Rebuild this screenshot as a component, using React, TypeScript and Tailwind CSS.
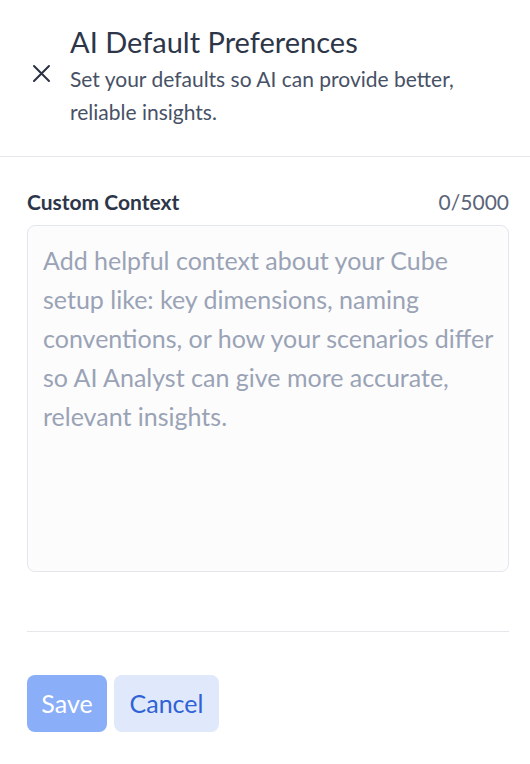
import React from "react";

export default function App() {
  return (
    <div className="w-[530px] h-[764px] bg-white flex flex-col" style={{ fontFamily: "Lato, 'Noto Sans', sans-serif" }}>
      <div className="flex items-start gap-[19px] pl-[32px] pt-[22px] pb-[28px] border-b border-[#e5e7eb]">
        <svg width="19" height="19" viewBox="0 0 19 19" className="shrink-0 mt-[42px]">
          <path d="M2 2L17 17M17 2L2 17" stroke="#2a3142" strokeWidth="2" strokeLinecap="round" />
        </svg>
        <div className="flex flex-col">
          <div className="text-[29px] leading-[40px] text-[#2d3648]">AI Default Preferences</div>
          <div className="text-[21px] leading-[33px] text-[#475166]">
            Set your defaults so AI can provide better,
            <br />
            reliable insights.
          </div>
        </div>
      </div>
      <div className="flex flex-col pl-[27px] pr-[21px] pt-[32px]">
        <div className="flex justify-between items-center text-[21px] leading-[26px]">
          <span className="font-bold text-[#2d3648]">Custom Context</span>
          <span className="text-[#5b6478]">0/5000</span>
        </div>
        <textarea
          className="mt-[10px] h-[347px] resize-none rounded-[8px] border border-[#e3e6ee] bg-[#fcfcfd] px-[15px] pt-[15px] pb-[13px] text-[25px] leading-[39px] placeholder:text-[#9aa3b5] outline-none"
          placeholder="Add helpful context about your Cube setup like: key dimensions, naming conventions, or how your scenarios differ so AI Analyst can give more accurate, relevant insights."
        />
        <div className="mt-[59px] border-t border-[#e5e7eb]" />
        <div className="flex gap-[7px] mt-[43px]">
          <button className="h-[57px] w-[80px] rounded-[8px] bg-[#8aaef8] text-white text-[25px]">Save</button>
          <button className="h-[57px] w-[105px] rounded-[8px] bg-[#dfe9fb] text-[#2f62d4] text-[25px]">Cancel</button>
        </div>
      </div>
    </div>
  );
}
